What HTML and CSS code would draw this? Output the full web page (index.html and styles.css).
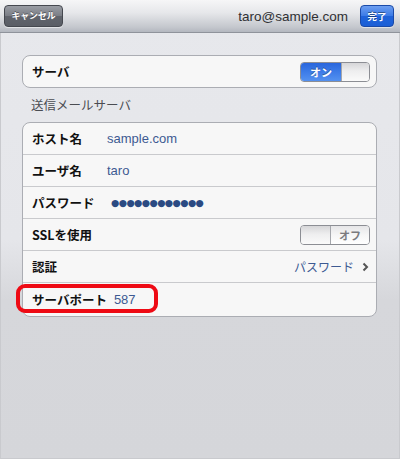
FILE: index.html
```html
<!DOCTYPE html>
<html lang="ja">
<head>
<meta charset="utf-8">
<link rel="stylesheet" href="styles.css">
</head>
<body>
<div class="screen">
  <header class="navbar">
    <button class="btn btn-cancel">キャンセル</button>
    <div class="title">taro@sample.com</div>
    <button class="btn btn-done">完了</button>
  </header>
  <main class="content">
    <section class="group">
      <div class="row">
        <span class="label">サーバ</span>
        <div class="toggle on">
          <span class="toggle-on">オン</span>
          <span class="knob"></span>
        </div>
      </div>
    </section>
    <div class="group-title">送信メールサーバ</div>
    <section class="group">
      <div class="row">
        <span class="label fixed">ホスト名</span>
        <span class="value">sample.com</span>
      </div>
      <div class="row">
        <span class="label fixed">ユーザ名</span>
        <span class="value">taro</span>
      </div>
      <div class="row">
        <span class="label fixed">パスワード</span>
        <span class="dots">●●●●●●●●●●●●</span>
      </div>
      <div class="row">
        <span class="label">SSLを使用</span>
        <div class="toggle off">
          <span class="knob"></span>
          <span class="toggle-off">オフ</span>
        </div>
      </div>
      <div class="row">
        <span class="label">認証</span>
        <span class="detail">パスワード
          <svg class="chev" width="7" height="10" viewBox="0 0 7 10"><path d="M1.5 1.5 L5 5 L1.5 8.5" fill="none" stroke="#555" stroke-width="2"/></svg>
        </span>
      </div>
      <div class="row last">
        <span class="label port">サーバポート</span>
        <span class="value">587</span>
        <div class="highlight"></div>
      </div>
    </section>
  </main>
</div>
</body>
</html>
```
FILE: styles.css
```css
* { box-sizing: border-box; }
html, body { margin: 0; padding: 0; }
body {
  width: 400px;
  height: 459px;
  overflow: hidden;
  font-family: "Noto Sans CJK JP", "Liberation Sans", sans-serif;
}
.screen {
  width: 400px;
  height: 459px;
  display: flex;
  flex-direction: column;
  background: linear-gradient(#e7e8ec 0, #e5e6ea 240px, #d6d7db 300px, #d5d6da 100%);
  border: 1px solid #c9cace;
  border-top: none;
}
.navbar {
  height: 33px;
  flex: none;
  display: flex;
  align-items: center;
  padding: 0 6px 0 4px;
  background: linear-gradient(#f6f6f7 0, #e6e7ea 40%, #c4c7cd 85%, #b3b7bf 100%);
  border-bottom: 1px solid #8f939b;
  margin: 0 -1px;
}
.btn {
  height: 22px;
  border-radius: 4px;
  color: #fff;
  font-family: "Noto Sans CJK JP", sans-serif;
  font-weight: bold;
  font-size: 8.8px;
  padding: 0;
  line-height: 20px;
  text-shadow: 0 -1px 0 rgba(0,0,0,0.4);
}
.btn-cancel {
  width: 59px;
  background: linear-gradient(#9a9da4 0, #7a7d85 50%, #61646c 51%, #5a5e66 100%);
  border: 1px solid #45484f;
  box-shadow: 0 1px 0 rgba(255,255,255,0.5);
}
.btn-done {
  width: 34px;
  font-size: 9.5px;
  background: linear-gradient(#6d9ef0 0, #3a7ae6 50%, #1f63da 51%, #1c5fd6 100%);
  border: 1px solid #1a4aa8;
  box-shadow: 0 1px 0 rgba(255,255,255,0.5);
}
.title {
  flex: 1;
  text-align: right;
  padding-right: 12px;
  font-family: "Liberation Sans", sans-serif;
  font-size: 13.5px;
  color: #2f3033;
  padding-top: 1px;
}
.content {
  padding: 22px 22px 0 21px;
}
.group {
  background: #f7f7f7;
  border: 1px solid #abadb3;
  border-radius: 8px;
}
.row {
  position: relative;
  height: 32px;
  display: flex;
  align-items: center;
  padding: 0 6px 0 9px;
  border-top: 1px solid #c9cacd;
}
.group .row:first-child {
  height: 31px;
  border-top: none;
}
.row.last { height: 34px; }
.label {
  font-weight: bold;
  font-size: 12.5px;
  color: #111;
  flex: none;
}
.label.fixed { width: 75px; }
.label.port { margin-right: 7px; }
.value {
  font-family: "Liberation Sans", sans-serif;
  font-size: 13px;
  color: #3d5a92;
}
.dots {
  margin-left: 4px;
  font-family: "DejaVu Sans", sans-serif;
  font-size: 9.5px;
  letter-spacing: -0.6px;
  color: #2b4a82;
}
.group-title {
  font-size: 12.5px;
  color: #4a4c52;
  padding: 7px 0 7px 9px;
  line-height: 20px;
}
.toggle {
  margin-left: auto;
  width: 70px;
  height: 20px;
  border: 1px solid #8c8e94;
  border-radius: 4px;
  display: flex;
  overflow: hidden;
}
.toggle-on {
  width: 40px;
  background: linear-gradient(#2a66dc 0, #3d7ce8 50%, #5491f0 100%);
  color: #fff;
  font-weight: bold;
  font-size: 11px;
  text-align: center;
  line-height: 18px;
  text-shadow: 0 -1px 0 rgba(0,0,0,0.35);
}
.knob {
  flex: 1;
  background: linear-gradient(#d6d6d8 0, #eeeeef 45%, #fafafa 100%);
  border-left: 1px solid #a5a7ac;
}
.toggle.off .knob {
  flex: none;
  width: 30px;
  border-left: none;
  border-right: 1px solid #a5a7ac;
}
.toggle-off {
  flex: 1;
  background: linear-gradient(#e6e6e8 0, #f6f6f6 50%, #ffffff 100%);
  color: #7a7a7e;
  font-weight: bold;
  font-size: 11px;
  text-align: center;
  line-height: 18px;
}
.detail {
  margin-left: auto;
  font-size: 12px;
  color: #3d5a92;
  display: flex;
  align-items: center;
  gap: 8px;
  padding-right: 1px;
}
.chev { display: block; }
.highlight {
  position: absolute;
  left: -7px;
  top: 1px;
  width: 142px;
  height: 29px;
  border: 4px solid #ee0a14;
  border-radius: 9px;
}
```
